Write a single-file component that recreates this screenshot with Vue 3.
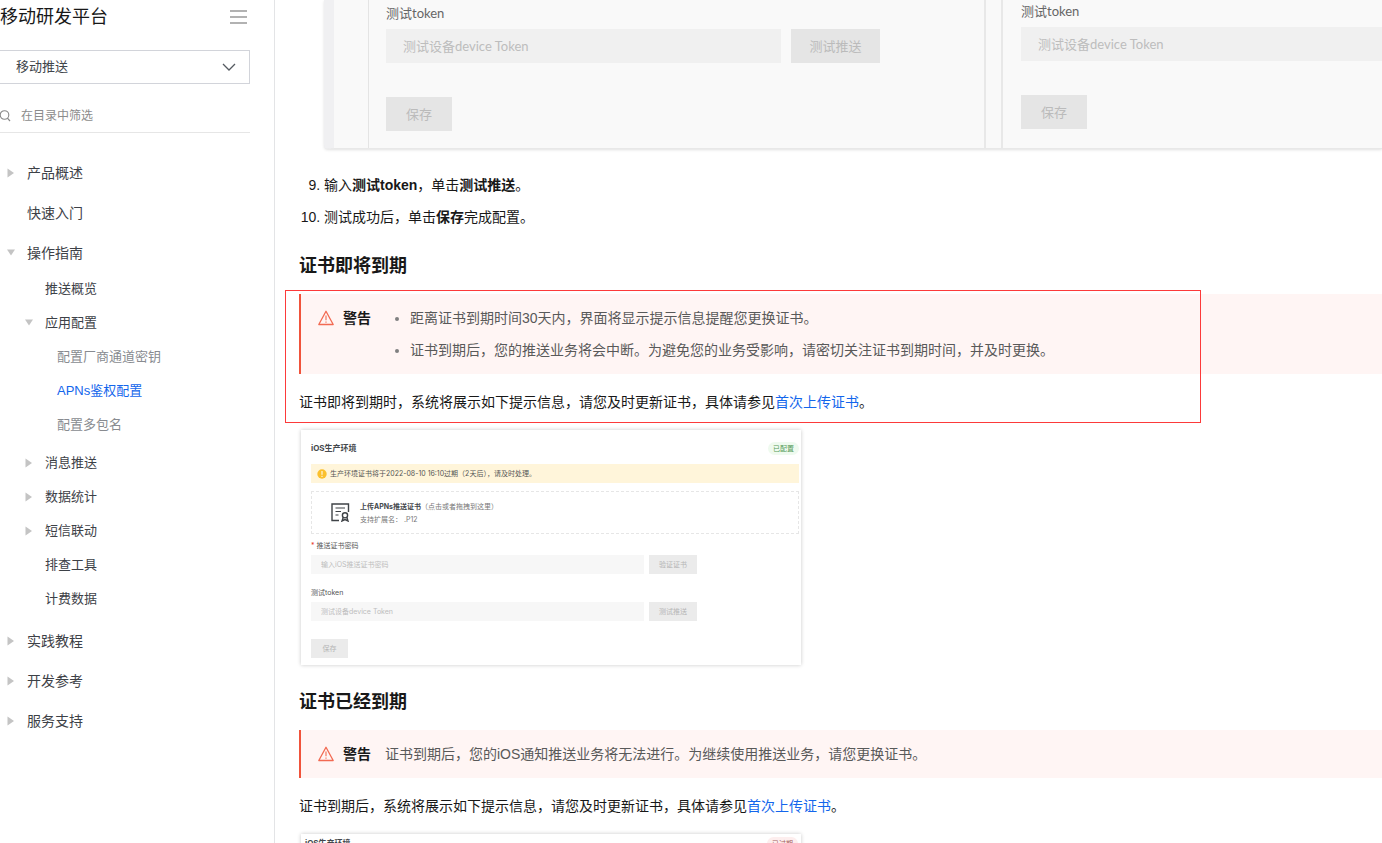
<script setup>
import { ref } from 'vue'

const product = ref('移动推送')
const keyword = ref('')

const nav = [
  { text: '产品概述', arrow: 'right' },
  { text: '快速入门' },
  {
    text: '操作指南',
    arrow: 'down',
    children: [
      { text: '推送概览' },
      {
        text: '应用配置',
        arrow: 'down',
        children: [
          { text: '配置厂商通道密钥' },
          { text: 'APNs鉴权配置', active: true },
          { text: '配置多包名' }
        ]
      },
      { text: '消息推送', arrow: 'right' },
      { text: '数据统计', arrow: 'right' },
      { text: '短信联动', arrow: 'right' },
      { text: '排查工具' },
      { text: '计费数据' }
    ]
  },
  { text: '实践教程', arrow: 'right' },
  { text: '开发参考', arrow: 'right' },
  { text: '服务支持', arrow: 'right' }
]

const arrows = { right: 'M0.5 0.5L7 5L0.5 9.5Z', down: 'M0 1.5H8L4 7.5Z' }
</script>

<template>
  <div class="page">
    <aside class="sidebar">
      <header class="side-head">
        <h2>移动研发平台</h2>
        <button class="menu" type="button" aria-label="收起目录">
          <svg width="17" height="14" viewBox="0 0 17 14"><path d="M0 1H17M0 7H17M0 13H17" stroke="#999" stroke-width="1.6" /></svg>
        </button>
      </header>
      <div class="picker">
        <select v-model="product" aria-label="产品">
          <option>移动推送</option>
        </select>
        <svg width="14" height="8" viewBox="0 0 14 8"><path d="M1 1L7 7L13 1" fill="none" stroke="#555a61" stroke-width="1.3" /></svg>
      </div>
      <label class="search">
        <svg width="11" height="12" viewBox="0 0 11 12"><circle cx="4.5" cy="5" r="4.3" fill="none" stroke="#888" stroke-width="1.1" /><path d="M7.4 8.2L10 11" stroke="#888" stroke-width="1.2" /></svg>
        <input v-model="keyword" type="text" placeholder="在目录中筛选" aria-label="在目录中筛选" />
      </label>
      <nav>
        <ul class="level1">
          <li v-for="a in nav" :key="a.text">
            <a href="#"><span class="arrow"><svg v-if="a.arrow" width="8" height="10" viewBox="0 0 8 10"><path :d="arrows[a.arrow]" /></svg></span>{{ a.text }}</a>
            <ul v-if="a.children" class="level2">
              <li v-for="b in a.children" :key="b.text">
                <a href="#"><span class="arrow"><svg v-if="b.arrow" width="8" height="10" viewBox="0 0 8 10"><path :d="arrows[b.arrow]" /></svg></span>{{ b.text }}</a>
                <ul v-if="b.children" class="level3">
                  <li v-for="c in b.children" :key="c.text">
                    <a href="#" :class="{ active: c.active }">{{ c.text }}</a>
                  </li>
                </ul>
              </li>
            </ul>
          </li>
        </ul>
      </nav>
    </aside>

    <main class="doc">
      <figure class="wide-shot">
        <div class="panel first">
          <label for="dev-token">测试token</label>
          <div class="row">
            <input id="dev-token" type="text" placeholder="测试设备device Token" disabled />
            <button class="push" type="button" disabled>测试推送</button>
          </div>
          <button class="save" type="button" disabled>保存</button>
        </div>
        <div class="panel second">
          <label for="prod-token">测试token</label>
          <div class="row">
            <input id="prod-token" type="text" placeholder="测试设备device Token" disabled />
          </div>
          <button class="save" type="button" disabled>保存</button>
        </div>
      </figure>

      <ol class="steps" start="9">
        <li>输入<b>测试token</b>，单击<b>测试推送</b>。</li>
        <li>测试成功后，单击<b>保存</b>完成配置。</li>
      </ol>

      <h3>证书即将到期</h3>
      <div class="marked">
        <div class="alert">
          <svg class="warn" width="16" height="16" viewBox="0 0 16 16"><path d="M8 1.2L15.2 14.5H0.8Z" fill="none" stroke="#f26a52" stroke-width="1.3" stroke-linejoin="round" /><path d="M8 5.5V10.2M8 11.4V12.8" stroke="#f5907e" stroke-width="1.5" /></svg>
          <strong>警告</strong>
          <ul>
            <li>距离证书到期时间30天内，界面将显示提示信息提醒您更换证书。</li>
            <li>证书到期后，您的推送业务将会中断。为避免您的业务受影响，请密切关注证书到期时间，并及时更换。</li>
          </ul>
        </div>
        <p>证书即将到期时，系统将展示如下提示信息，请您及时更新证书，具体请参见<a href="#">首次上传证书</a>。</p>
        <div class="outline"></div>
      </div>

      <figure class="card">
        <div class="card-head">
          <b>iOS生产环境</b>
          <span class="badge ok">已配置</span>
        </div>
        <div class="notice">
          <svg width="10" height="10" viewBox="0 0 10 10"><circle cx="5" cy="5" r="4.7" fill="#fbc02d" /><path d="M5 2V5.8M5 6.8V8" stroke="#fff" stroke-width="1" /></svg>
          生产环境证书将于2022-08-10 16:10过期（2天后），请及时处理。
        </div>
        <div class="upload">
          <svg width="19" height="19" viewBox="0 0 19 19" fill="none" stroke="#3f4347" stroke-width="1.4"><path d="M8 17.5H1V1H17.5V9" /><path d="M4.5 5H14M4.5 8.5H10M4.5 12H7.5" stroke-width="1.2" /><circle cx="14" cy="12.3" r="2.6" /><path d="M12.3 14.2L11 18L14 16.6L17 18L15.8 14.2" stroke-width="1.4" /></svg>
          <div>
            <div><b>上传APNs推送证书</b>（点击或者拖拽到这里）</div>
            <div>支持扩展名： .P12</div>
          </div>
        </div>
        <label for="cert-pass"><i>*</i> 推送证书密码</label>
        <div class="row">
          <input id="cert-pass" type="text" placeholder="输入iOS推送证书密码" disabled />
          <button type="button" disabled>验证证书</button>
        </div>
        <label for="card-token" class="later">测试token</label>
        <div class="row">
          <input id="card-token" type="text" placeholder="测试设备device Token" disabled />
          <button type="button" disabled>测试推送</button>
        </div>
        <button class="save" type="button" disabled>保存</button>
      </figure>

      <h3>证书已经到期</h3>
      <div class="alert">
        <svg class="warn" width="16" height="16" viewBox="0 0 16 16"><path d="M8 1.2L15.2 14.5H0.8Z" fill="none" stroke="#f26a52" stroke-width="1.3" stroke-linejoin="round" /><path d="M8 5.5V10.2M8 11.4V12.8" stroke="#f5907e" stroke-width="1.5" /></svg>
        <strong>警告</strong>
        <span class="single">证书到期后，您的iOS通知推送业务将无法进行。为继续使用推送业务，请您更换证书。</span>
      </div>
      <p>证书到期后，系统将展示如下提示信息，请您及时更新证书，具体请参见<a href="#">首次上传证书</a>。</p>

      <figure class="card expired">
        <div class="card-head">
          <b>iOS生产环境</b>
          <span class="badge bad">已过期</span>
        </div>
      </figure>
    </main>
  </div>
</template>

<style>
body {
  margin: 0;
  background: #fff;
}
</style>

<style scoped>
.page {
  display: flex;
  height: 100vh;
  overflow: hidden;
  font-family: "Liberation Sans", "Noto Sans CJK SC", sans-serif;
  font-size: 14px;
  line-height: 24px;
  color: #181818;
}
.page * {
  box-sizing: border-box;
}
ul, ol, h2, h3, p, figure {
  margin: 0;
  padding: 0;
}
a {
  color: #1366ec;
  text-decoration: none;
}
button, input, select {
  font: inherit;
  border: 0;
  border-radius: 0;
  margin: 0;
  padding: 0;
}

/* sidebar */
.sidebar {
  flex: none;
  width: 275px;
  padding: 5px 24px 0 0;
  border-right: 1px solid #e3e4e6;
}
.side-head {
  display: flex;
  justify-content: space-between;
  align-items: center;
  padding-right: 3px;
}
.side-head h2 {
  font-size: 18px;
  font-weight: 400;
}
.menu {
  display: flex;
  background: none;
}
.picker {
  display: grid;
  align-items: center;
  margin-top: 21px;
}
.picker select {
  grid-area: 1 / 1;
  appearance: none;
  width: 100%;
  height: 34px;
  padding-left: 16px;
  border: 1px solid #d2d4da;
  border-left: 0;
  background: #fff;
  color: #40444a;
  font-size: 13px;
}
.picker svg {
  grid-area: 1 / 1;
  justify-self: end;
  margin-right: 14px;
  pointer-events: none;
}
.search {
  display: flex;
  align-items: center;
  gap: 10px;
  height: 33px;
  margin-top: 16px;
  border-bottom: 1px solid #e6e6e6;
}
.search input {
  flex: 1;
  min-width: 0;
  outline: 0;
  font-size: 12px;
}
.search input::placeholder {
  color: #8c8c8c;
}
nav ul {
  display: flex;
  flex-direction: column;
  list-style: none;
}
nav a {
  display: flex;
  align-items: center;
  line-height: 20px;
  color: #3d4147;
}
.level1 {
  gap: 20px;
  margin-top: 30px;
}
.level1 > li > a {
  padding-left: 7px;
}
.level2 {
  gap: 14px;
  margin: 16px 0 2px;
  font-size: 13px;
}
.level2 > li > a {
  padding-left: 25px;
}
.level3 {
  gap: 14px;
  margin: 14px 0 4px;
}
.level3 > li > a {
  padding-left: 57px;
  color: #888b90;
}
.level3 > li > a.active {
  color: #1366ec;
}
.arrow {
  display: flex;
  width: 20px;
}
.arrow path {
  fill: #c4c4c4;
}

/* document */
.doc {
  flex: 1;
  min-width: 0;
  padding-left: 24px;
}
.wide-shot {
  display: flex;
  margin-left: 25px;
  padding-left: 34px;
  background: #f9f9f9;
  border-left: 10px solid #f0f0f2;
  border-bottom: 1px solid #e8e8e8;
  border-bottom-left-radius: 4px;
  box-shadow: 0 1px 3px rgba(0, 0, 0, 0.12);
  font-family: Lato, "Noto Sans CJK SC", sans-serif;
  font-size: 13px;
  line-height: 20px;
}
.panel {
  padding-left: 17px;
  border-left: 1px solid #e4e4e4;
}
.panel label {
  display: block;
  color: #666;
}
.panel.first {
  width: 618px;
  flex: none;
  padding-top: 3px;
  padding-bottom: 17px;
  border-right: 2px solid #e8e8e8;
}
.panel.second {
  flex: 1;
  margin-left: 15px;
  padding-top: 1px;
  padding-left: 18px;
  border-left: 2px solid #e8e8e8;
}
.panel .row {
  display: flex;
  gap: 10px;
  margin: 6px 0 34px;
}
.panel input {
  flex: 1;
  height: 34px;
  padding-left: 17px;
  background: #f0f0f0;
}
.panel.first input {
  flex: none;
  width: 395px;
}
.panel button {
  display: block;
  height: 34px;
  background: #e5e5e5;
  color: #bbb;
}
.panel .push {
  width: 89px;
}
.panel .save {
  width: 66px;
}
input:disabled::placeholder {
  color: #bdbdbd;
}
.steps {
  display: flex;
  flex-direction: column;
  gap: 8px;
  margin-top: 24px;
  padding-left: 25px;
}
h3 {
  margin: 23px 0 14px;
  font-size: 18px;
  line-height: 28px;
}
.marked {
  position: relative;
}
.outline {
  position: absolute;
  left: -14px;
  top: -4px;
  width: 916px;
  height: 133px;
  border: 1px solid #fc3a3a;
  pointer-events: none;
}
.alert {
  display: flex;
  padding: 12px 16px 12px 17px;
  border-left: 2px solid #f0533b;
  background: #fff5f4;
  color: #595959;
}
.warn {
  flex: none;
  margin: 4px 9px 0 0;
}
.alert strong {
  flex: none;
  color: #181818;
}
.alert ul {
  display: flex;
  flex-direction: column;
  gap: 8px;
  margin-left: 14px;
  padding-left: 25px;
}
.alert li::marker {
  color: #808080;
}
.single {
  margin-left: 14px;
}
p {
  margin: 16px 0;
}

/* configuration card */
.card {
  width: 500px;
  margin-left: 2px;
  padding: 11px 2px 7px 10px;
  background: #fff;
  box-shadow: 0 0 4px rgba(0, 0, 0, 0.22);
  font-family: Inter, "Noto Sans CJK SC", sans-serif;
  font-size: 7px;
  line-height: 13px;
  color: #777;
}
.card-head {
  display: flex;
  justify-content: space-between;
  align-items: center;
  height: 14px;
}
.card-head b {
  font-size: 8px;
  color: #44484c;
}
.badge {
  padding: 0 5px;
  border-radius: 7px;
}
.badge.ok {
  background: #effaef;
  color: #559a58;
}
.badge.bad {
  background: #fdeeee;
  color: #a86060;
}
.notice {
  display: flex;
  align-items: center;
  gap: 3px;
  height: 19px;
  margin-top: 9px;
  padding-left: 6px;
  background: #fff5da;
  color: #555;
}
.upload {
  display: flex;
  align-items: center;
  gap: 10px;
  height: 43px;
  margin-top: 8px;
  padding-left: 19px;
  border: 1px dashed #e6e6e6;
}
.upload b {
  color: #44484c;
}
.card label {
  display: block;
  margin-top: 5px;
  color: #555;
}
.card label.later {
  margin-top: 12px;
}
.card i {
  color: #e8392b;
  font-style: normal;
}
.card .row {
  display: flex;
  gap: 5px;
  margin-top: 3px;
}
.card input {
  width: 333px;
  height: 19px;
  padding-left: 10px;
  background: #f7f7f7;
}
.card button {
  display: block;
  width: 48px;
  height: 19px;
  background: #ebebeb;
  color: #b5b5b5;
}
.card .save {
  width: 37px;
  margin-top: 18px;
}
.card.expired {
  padding: 2px 3px 7px 4px;
}
</style>
